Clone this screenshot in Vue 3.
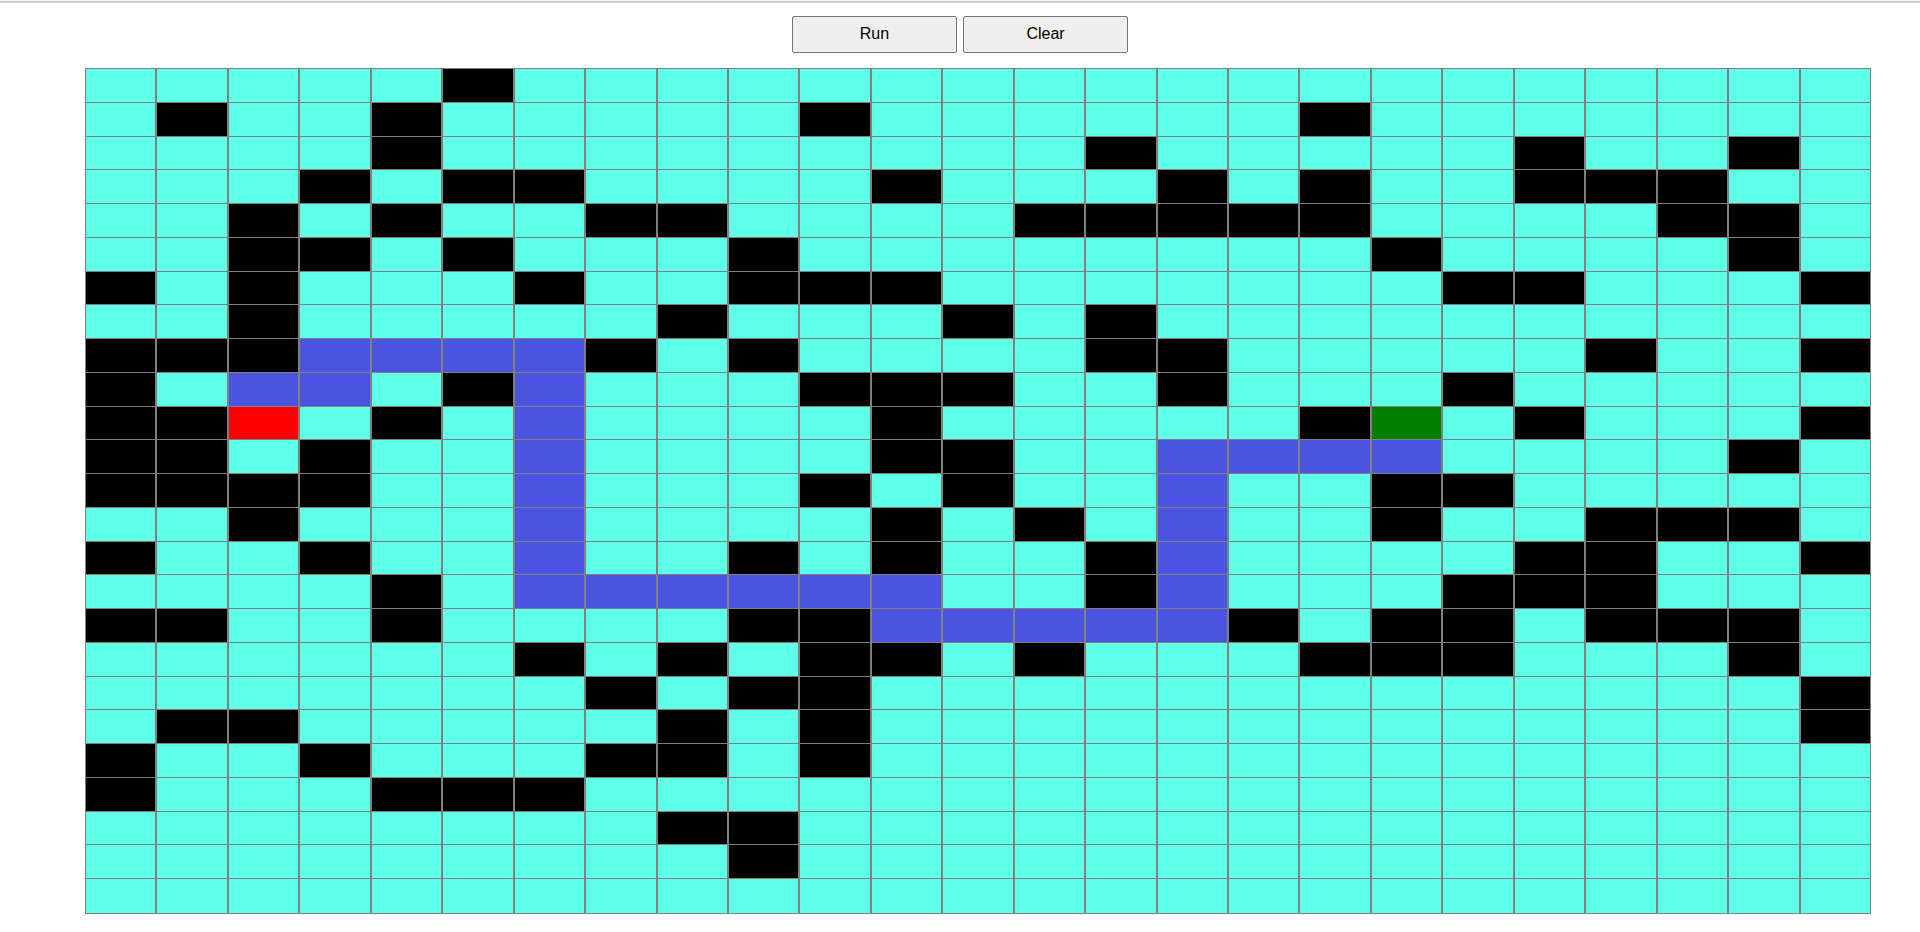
<script setup>
import { ref } from 'vue'

const SIZE = 25

const walls = [
  [5],
  [1, 4, 10, 17],
  [4, 14, 20, 23],
  [3, 5, 6, 11, 15, 17, 20, 21, 22],
  [2, 4, 7, 8, 13, 14, 15, 16, 17, 22, 23],
  [2, 3, 5, 9, 18, 23],
  [0, 2, 6, 9, 10, 11, 19, 20, 24],
  [2, 8, 12, 14],
  [0, 1, 2, 7, 9, 14, 15, 21, 24],
  [0, 5, 10, 11, 12, 15, 19],
  [0, 1, 4, 11, 17, 20, 24],
  [0, 1, 3, 11, 12, 23],
  [0, 1, 2, 3, 10, 12, 18, 19],
  [2, 11, 13, 18, 21, 22, 23],
  [0, 3, 9, 11, 14, 20, 21, 24],
  [4, 14, 19, 20, 21],
  [0, 1, 4, 9, 10, 16, 18, 19, 21, 22, 23],
  [6, 8, 10, 11, 13, 17, 18, 19, 23],
  [7, 9, 10, 24],
  [1, 2, 8, 10, 24],
  [0, 3, 7, 8, 10],
  [0, 4, 5, 6],
  [8, 9],
  [9],
  []
]

const route = {
  8: [3, 4, 5, 6],
  9: [2, 3, 6],
  10: [6],
  11: [6, 15, 16, 17, 18],
  12: [6, 15],
  13: [6, 15],
  14: [6, 15],
  15: [6, 7, 8, 9, 10, 11, 15],
  16: [11, 12, 13, 14, 15]
}

const start = 10 * SIZE + 2
const goal = 10 * SIZE + 18

function buildCells() {
  const list = Array(SIZE * SIZE).fill('open')
  walls.forEach((cols, r) => cols.forEach((c) => { list[r * SIZE + c] = 'wall' }))
  list[start] = 'start'
  list[goal] = 'goal'
  return list
}

const cells = ref(buildCells())

function run() {
  Object.entries(route).forEach(([r, cols]) =>
    cols.forEach((c) => { cells.value[r * SIZE + c] = 'path' })
  )
}

function clear() {
  cells.value = cells.value.map((kind) => (kind === 'path' ? 'open' : kind))
}

run()
</script>

<template>
  <main class="page">
    <div class="toolbar">
      <button type="button" class="action" @click="run">Run</button>
      <button type="button" class="action" @click="clear">Clear</button>
    </div>
    <div class="board">
      <div v-for="(kind, i) in cells" :key="i" class="cell" :class="kind"></div>
    </div>
  </main>
</template>

<style>
body {
  margin: 0;
  background: #fff;
}
</style>

<style scoped>
.page {
  box-sizing: border-box;
  display: flex;
  flex-direction: column;
  min-height: 100vh;
  padding-bottom: 18px;
  border-top: 1px solid #f1f3f2;
  font-family: "Liberation Sans", Arial, sans-serif;
}

.toolbar {
  display: flex;
  justify-content: center;
  gap: 6px;
  padding: 13px 0 15px;
  border-top: 2px solid #d0d2d1;
}

.action {
  box-sizing: border-box;
  width: 165px;
  height: 37px;
  padding: 0 0 2px;
  border: 1px solid #767676;
  border-radius: 2px;
  background: #efefef;
  color: #000;
  font-family: inherit;
  font-size: 16px;
}

.board {
  flex: 1;
  display: grid;
  grid-template-columns: repeat(25, 1fr);
  grid-template-rows: repeat(24, 1fr) 35px;
  margin: 0 49px 0 85px;
  border-bottom: 1px solid #808080;
}

.cell {
  border: 1px solid #808080;
  border-bottom: 0;
}

.open {
  background: #60ffe8;
}

.wall {
  background: #000;
}

.path {
  background: #4a54de;
}

.start {
  background: #f00;
}

.goal {
  background: #008000;
}
</style>
